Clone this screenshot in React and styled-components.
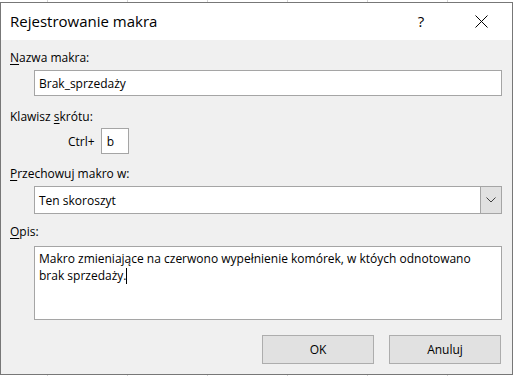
import styled, { createGlobalStyle } from "styled-components";

const GlobalStyle = createGlobalStyle`
    html, body {
        margin: 0;
        padding: 0;
        background: #ffffff;
    }
    body {
        font-family: "Segoe UI", "Open Sans", "Noto Sans", sans-serif;
        color: #000000;
    }
`;

const App = () => {
    return (
        <>
            <GlobalStyle />
            <StSheet>
                <StDialog>
                    <StTitleBar>
                        <StTitle>Rejestrowanie makra</StTitle>
                        <StHelp>?</StHelp>
                        <StClose>
                            <svg width="13" height="13" viewBox="0 0 13 13">
                                <path d="M0.5 0.5 L12.5 12.5 M12.5 0.5 L0.5 12.5" stroke="#000" strokeWidth="1" fill="none" />
                            </svg>
                        </StClose>
                    </StTitleBar>

                    <StBody>
                        <StLabel>
                            <u>N</u>azwa makra:
                        </StLabel>
                        <StField gap={4} height={26}>
                            Brak_sprzedaży
                        </StField>

                        <StLabel top={13}>
                            Klawisz <u>s</u>krótu:
                        </StLabel>
                        <StShortcut>
                            <span>Ctrl+</span>
                            <StKeyBox>b</StKeyBox>
                        </StShortcut>

                        <StLabel top={12}>
                            <u>P</u>rzechowuj makro w:
                        </StLabel>
                        <StSelect>
                            <StSelectText>Ten skoroszyt</StSelectText>
                            <StSelectButton>
                                <svg width="10" height="6" viewBox="0 0 10 6">
                                    <path d="M0.5 0.5 L5 5 L9.5 0.5" stroke="#404040" strokeWidth="1" fill="none" />
                                </svg>
                            </StSelectButton>
                        </StSelect>

                        <StLabel top={10}>
                            <u>O</u>pis:
                        </StLabel>
                        <StMemo>
                            Makro zmieniające na czerwono wypełnienie komórek, w któych odnotowano
                            <br />
                            brak sprzedaży.
                            <StCaret />
                        </StMemo>

                        <StButtons>
                            <StButton>OK</StButton>
                            <StButton>Anuluj</StButton>
                        </StButtons>
                    </StBody>
                </StDialog>
            </StSheet>
        </>
    );
};

export default App;

// arkusz excela w tle
const StSheet = styled.div`
    width: 514px;
    height: 376px;
    padding-top: 2px;
    box-sizing: border-box;
    background-color: #ffffff;
    background-image: linear-gradient(to right, transparent 47px, #d4d4d4 47px, #d4d4d4 48px, transparent 48px),
        linear-gradient(to bottom, transparent 20px, #d4d4d4 20px, #d4d4d4 21px, transparent 21px);
    background-size: 80px 100%, 100% 20px;
    background-position: 0 0, 0 0;
`;

const StDialog = styled.div`
    width: 513px;
    height: 373px;
    box-sizing: border-box;
    border: 1px solid #777777;
    background: #f0f0f0;
    display: flex;
    flex-direction: column;
`;

const StTitleBar = styled.div`
    height: 37px;
    background: #ffffff;
    display: flex;
    align-items: center;
    padding-left: 9px;
`;

const StTitle = styled.div`
    font-size: 15px;
    flex: 1;
    padding-bottom: 2px;
`;

const StHelp = styled.div`
    font-size: 15px;
    width: 14px;
    text-align: center;
    margin-right: 47px;
    padding-bottom: 2px;
`;

const StClose = styled.div`
    width: 13px;
    height: 13px;
    margin-right: 24px;
    display: flex;
`;

const StBody = styled.div`
    flex: 1;
    display: flex;
    flex-direction: column;
    padding: 10px 10px 0 9px;
    font-size: 12px;
`;

const StLabel = styled.div`
    line-height: 16px;
    margin-top: ${(props) => props.top || 0}px;

    u {
        text-underline-offset: 2px;
    }
`;

const StField = styled.div`
    margin: ${(props) => props.gap}px 0 0 24px;
    height: ${(props) => props.height}px;
    box-sizing: border-box;
    border: 1px solid #a5a5a5;
    background: #ffffff;
    padding: 0 4px;
    display: flex;
    align-items: center;
`;

const StShortcut = styled.div`
    margin: 3px 0 0 58px;
    display: flex;
    align-items: center;
    gap: 6px;
`;

const StKeyBox = styled.div`
    width: 28px;
    height: 26px;
    box-sizing: border-box;
    border: 1px solid #a5a5a5;
    background: #ffffff;
    padding: 0 5px;
    display: flex;
    align-items: center;
`;

const StSelect = styled.div`
    margin: 4px 0 0 24px;
    height: 28px;
    box-sizing: border-box;
    border: 1px solid #a5a5a5;
    background: #ffffff;
    display: flex;
`;

const StSelectText = styled.div`
    flex: 1;
    padding: 0 4px;
    display: flex;
    align-items: center;
`;

const StSelectButton = styled.div`
    width: 20px;
    background: #e1e1e1;
    border-left: 1px solid #a5a5a5;
    display: flex;
    align-items: center;
    justify-content: center;
`;

const StMemo = styled.div`
    margin: 6px 0 0 24px;
    height: 74px;
    box-sizing: border-box;
    border: 1px solid #a5a5a5;
    background: #ffffff;
    padding: 3px 4px;
    line-height: 17px;
    white-space: nowrap;
`;

const StCaret = styled.span`
    display: inline-block;
    width: 1px;
    height: 16px;
    background: #000000;
    vertical-align: -4px;
`;

const StButtons = styled.div`
    margin-top: 15px;
    display: flex;
    justify-content: flex-end;
    gap: 15px;
    padding-right: 1px;
`;

const StButton = styled.div`
    width: 112px;
    height: 29px;
    box-sizing: border-box;
    border: 1px solid #adadad;
    background: #e1e1e1;
    display: flex;
    align-items: center;
    justify-content: center;
`;
